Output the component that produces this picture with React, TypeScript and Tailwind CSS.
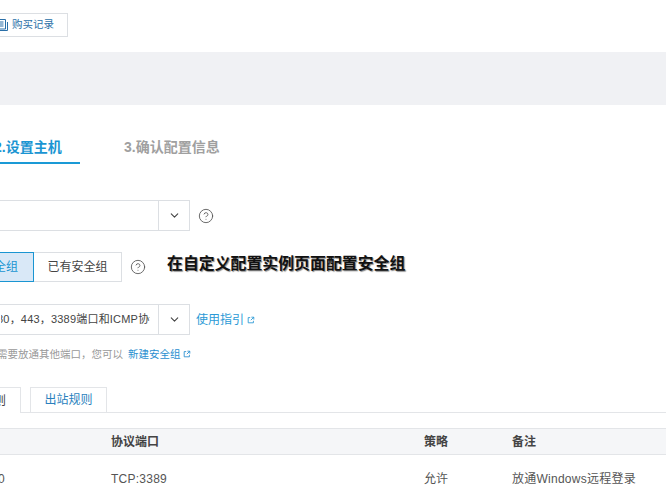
import React from 'react';
import { ChevronDown, CircleHelp } from 'lucide-react';

const FONT = "font-['Liberation_Sans','Noto_Sans_CJK_SC',sans-serif]";

const ExternalIcon = ({ className }: { className?: string }) => (
  <svg viewBox="0 0 10 10" className={className} fill="none" stroke="currentColor" strokeWidth="1.1">
    <path d="M4 2H1.500v6.500H8V6" />
    <path d="M5.500 1.500h3v3M8.500 1.500 4.800 5.200" />
  </svg>
);

const RecordIcon = ({ className }: { className?: string }) => (
  <svg viewBox="0 0 14 14" className={className} fill="none" stroke="currentColor" strokeWidth="1">
    <path d="M2.500 1.500h8v9.500h-8z" />
    <path d="M4.500 4h4M4.500 6h4M4.500 8h4" />
    <path d="M1 12.500h11.500V4" />
  </svg>
);

const Help = () => <CircleHelp className="w-[16px] h-[16px] text-[#555] shrink-0" strokeWidth={1.3} />;

const SelectBox = ({ children }: { children?: React.ReactNode }) => (
  <div className="flex w-[200px] h-[31px] -ml-[10px] border border-[#dcdfe3] bg-white shrink-0">
    <div className="flex-1 min-w-0 flex items-center overflow-hidden ml-[10px] mr-[8px]">{children}</div>
    <div className="w-[31px] border-l border-[#dcdfe3] flex items-center justify-center">
      <ChevronDown className="w-[13px] h-[13px] text-[#444]" strokeWidth={2} />
    </div>
  </div>
);

export default function App() {
  return (
    <div className={`w-[666px] h-[500px] overflow-hidden bg-white ${FONT}`}>
      <div className="h-[52px] pt-[13px]">
        <button className="flex items-center gap-[2px] w-[79px] h-[24px] -ml-[11px] pl-[5px] border border-[#dcdfe3] text-[10.500px] text-[#2a6fa8]">
          <RecordIcon className="w-[14px] h-[14px] text-[#2a6fa8]" />
          <span className="ml-[1px]">购买记录</span>
        </button>
      </div>

      <div className="h-[53px] bg-[#f0f1f4]" />

      <div className="flex items-start h-[60px] mt-[34px] -ml-[20px] text-[14px] font-bold">
        <div className="w-[100px] h-[25px] pl-[14px] border-b-2 border-[#1a9ad6] text-[#1a95d2] leading-[17px]">2.设置主机</div>
        <div className="ml-[44px] text-[#a0a0a0] leading-[17px]">3.确认配置信息</div>
      </div>

      <div className="flex items-center gap-[8px] mt-[1px]">
        <SelectBox />
        <Help />
      </div>

      <div className="flex items-center mt-[21px]">
        <div className="flex h-[30px] -ml-[20px] text-[12px]">
          <div className="w-[54px] border border-[#1a95d2] bg-[#d9e8f7] text-[#1a95d2] flex items-center justify-end pr-[15px]">
            安全组
          </div>
          <div className="w-[88px] border border-l-0 border-[#dcdfe3] text-[#444] flex items-center justify-center">
            已有安全组
          </div>
        </div>
        <div className="ml-[8px]"><Help /></div>
        <span className="ml-[21px] text-[15.900px] font-bold text-[#111] [text-shadow:1px_1px_1px_#888] -mt-[7px]">
          在自定义配置实例页面配置安全组
        </span>
      </div>

      <div className="flex items-center mt-[22px]">
        <SelectBox>
          <span className="text-[11px] tracking-[0.2px] text-[#444] whitespace-nowrap -ml-[4px]">80，443，3389端口和ICMP协议</span>
        </SelectBox>
        <a className="ml-[6px] text-[12px] text-[#2a9ad6]">使用指引</a>
        <ExternalIcon className="w-[8px] h-[8px] ml-[3px] text-[#2a9ad6]" />
      </div>

      <div className="flex items-center mt-[12px] h-[16px] -ml-[3px] text-[10.500px] whitespace-nowrap">
        <span className="text-[#999]">需要放通其他端口，您可以</span>
        <a className="ml-[5px] text-[#2a8fd0]">新建安全组</a>
        <ExternalIcon className="w-[8px] h-[8px] ml-[2px] -mt-[3px] text-[#2a8fd0]" />
      </div>

      <div className="flex items-end h-[26px] mt-[24px] border-b border-[#e3e5e8]">
        <div className="flex items-center justify-end w-[21px] h-[26px] pr-[14px] border-r border-t border-[#e3e5e8] bg-white text-[12px] text-[#444] -mb-[1px] overflow-hidden whitespace-nowrap">
          则
        </div>
        <div className="flex items-center justify-center w-[77px] h-[25px] ml-[9px] border border-b-0 border-[#e3e5e8] text-[12px] text-[#2a7fbd]">
          出站规则
        </div>
      </div>

      <div className="grid grid-cols-[111px_313px_88px_1fr] items-center h-[27px] mt-[15px] bg-[#f5f6f8] border-y border-[#e3e5e8] text-[12px] font-bold text-[#444]">
        <span />
        <span>协议端口</span>
        <span>策略</span>
        <span>备注</span>
      </div>

      <div className="grid grid-cols-[111px_313px_88px_1fr] items-center h-[48px] text-[12px] text-[#555]">
        <span className="-ml-[2px]">0</span>
        <span className="tracking-[0.25px]">TCP:3389</span>
        <span>允许</span>
        <span className="tracking-[0.25px]">放通Windows远程登录</span>
      </div>
    </div>
  );
}
